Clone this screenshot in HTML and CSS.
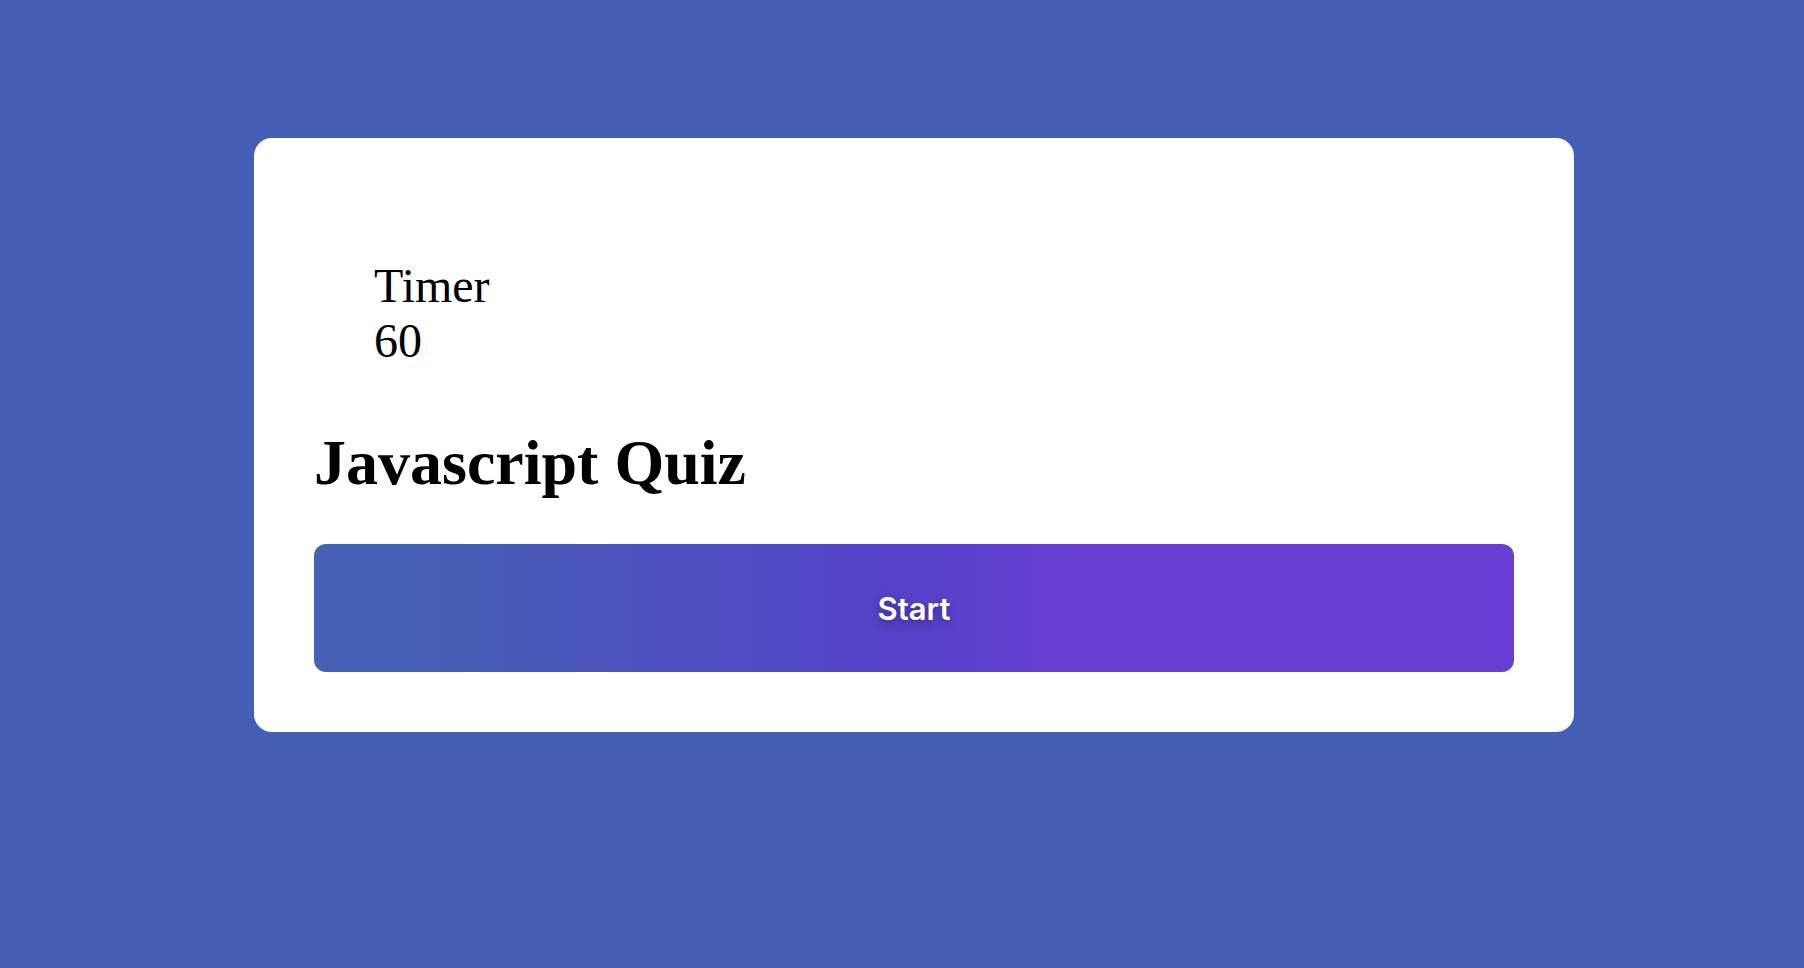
FILE: index.html
```
<!DOCTYPE html>
<html lang="en">
<head>
<meta charset="utf-8">
<title>Javascript Quiz</title>
<link rel="stylesheet" href="styles.css">
</head>
<body>
  <main class="page">
    <section class="card">
      <div class="timer">
        <div class="timer-label">Timer</div>
        <div class="timer-value">60</div>
      </div>
      <h1 class="title">Javascript Quiz</h1>
      <button class="start-btn" type="button">Start</button>
    </section>
  </main>
</body>
</html>
```

FILE: styles.css
```
html, body {
  margin: 0;
  padding: 0;
  height: 100%;
}

body {
  background: #445fb5;
  font-family: "Liberation Serif", "Times New Roman", serif;
  color: #000;
}

.page {
  display: flex;
  justify-content: center;
  align-items: flex-start;
  padding: 138px 0 0 24px;
  box-sizing: border-box;
  min-height: 100%;
}

.card {
  box-sizing: border-box;
  width: 1320px;
  background: #ffffff;
  border-radius: 18px;
  padding: 60px;
  display: flex;
  flex-direction: column;
}

.timer {
  padding: 60px 0 0 60px;
  font-size: 48px;
  line-height: normal;
}

.title {
  margin: 58px 0 44px;
  font-size: 64px;
  font-weight: bold;
  line-height: normal;
}

.start-btn {
  height: 128px;
  width: 100%;
  border: none;
  border-radius: 12px;
  background: linear-gradient(90deg, #4461b3 0%, #4561b3 8%, #5442c8 48%, #673dd4 64%, #673dd4 100%);
  color: #ffffff;
  font-family: Inter, "Noto Sans", sans-serif;
  font-weight: 600;
  font-size: 31px;
  text-shadow: 0 3px 8px rgba(0, 0, 0, 0.35);
  cursor: pointer;
  padding: 0;
}
```
